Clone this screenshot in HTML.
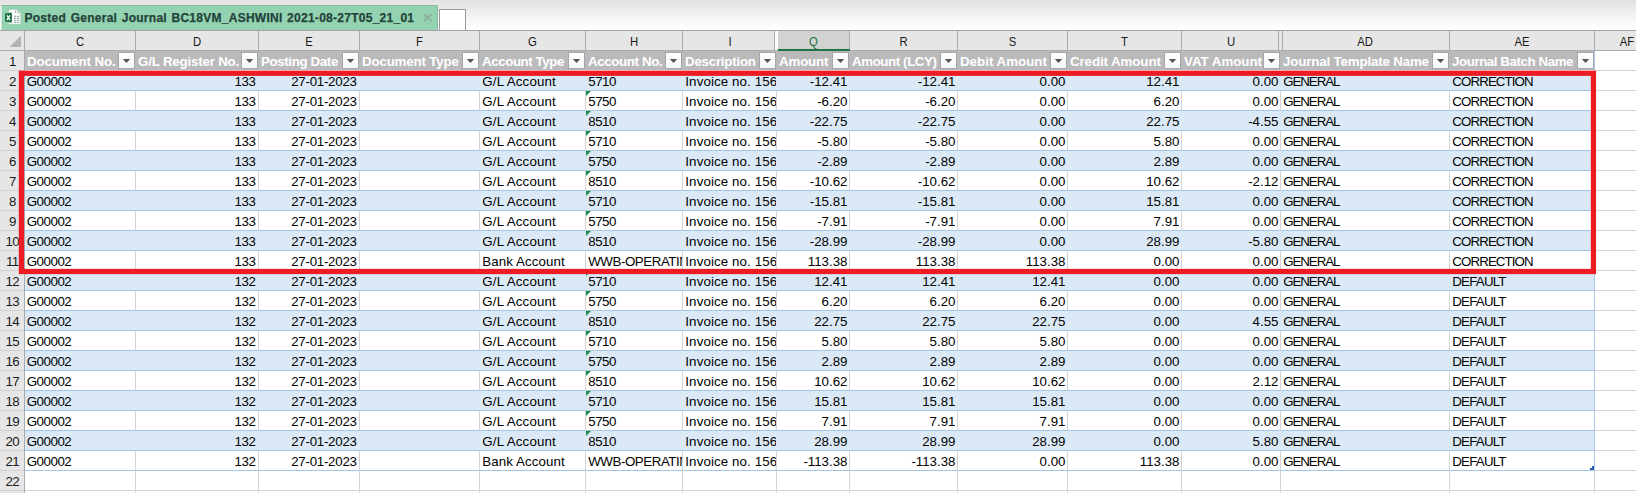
<!DOCTYPE html><html><head><meta charset="utf-8"><title>Posted General Journal</title><style>
html,body{margin:0;padding:0}
body{width:1636px;height:493px;overflow:hidden;position:relative;background:#fff;font-family:"Liberation Sans",sans-serif;font-size:13.3px;color:#000}
div{position:absolute;box-sizing:border-box;white-space:nowrap}
#top{left:0;top:0;width:1636px;height:30px;background:linear-gradient(#e2e2e2,#fcfcfc 85%,#fefefe)}
#topline{left:0;top:30px;width:1636px;height:1px;background:#a3a3a3}
#tab{left:1px;top:5px;width:437px;height:25px;background:#93d3b2;border:1px solid #8cb8a1;border-bottom:none;border-left:1px solid #cfe9dc}
#tabtxt{left:24.5px;top:11px;font-weight:bold;font-size:12px;line-height:14px;color:#24433a;letter-spacing:0.27px;word-spacing:0.9px;-webkit-text-stroke:0.25px #24433a}
#newtab{left:439px;top:9px;width:27px;height:21px;background:#fff;border:1px solid #9a9a9a;border-bottom:none}
#chbg{left:0;top:31px;width:1636px;height:19px;background:#e6e6e6}
#chline{left:0;top:50px;width:1636px;height:1px;background:#ababab}
.vs{top:31px;width:1px;height:19px;background:#ababab}
.ch{top:31px;height:19px;text-align:center;line-height:21px;font-size:13px;color:#1a1a1a;overflow:hidden;transform:scaleX(0.87)}
.ch.sel{color:#217346}
#rhbg{left:0;top:51px;width:25px;height:442px;background:#e6e6e6;border-right:1px solid #ababab}
.rh{left:0;width:24px;height:20px;border-bottom:1px solid #d2d2d2;text-align:center;line-height:21px;font-size:13.3px;letter-spacing:-0.5px;padding-left:0.7px;color:#1a1a1a;overflow:hidden}
#hbg{left:25px;top:51px;width:1570px;height:19px;background:#bababa}
.hc{top:51px;height:19px;color:#fff;font-weight:bold;line-height:22px;padding-left:2px;overflow:hidden}
.fb{top:52px;width:17px;height:17px;background:linear-gradient(#fefefe,#f5f7fb);border:1px solid #a6a6a6}
.fb svg{position:absolute;left:0;top:0}
.c{height:20px;line-height:20px;overflow:hidden;padding:1px 1.5px 0 2.3px;border-bottom:1px solid #a3c6e7;border-right:1px solid #dbe9f6;background:#dbe9f6}
.c.w{border-right-color:#d4d4d4;background:#fff}
.c.r{text-align:right}
.tri{width:0;height:0;border-top:5.5px solid #1b8a42;border-right:5.5px solid transparent}
.e{height:20px;border-right:1px solid #d4d4d4;border-bottom:1px solid #d4d4d4}
</style></head><body>
<div id="top"></div>
<div id="tab"></div>
<svg style="position:absolute;left:4px;top:8px" width="18" height="18" viewBox="0 0 18 18"><path d="M4.8 1.8H13L16.4 5.2V16.1H4.8z" fill="#fff" stroke="#b9cbc1" stroke-width="0.5"/><path d="M13 1.8V5.2H16.4z" fill="#dde6e1" stroke="#b0c2b8" stroke-width="0.4"/><path d="M11.4 3.2v1.6" stroke="#5d7468" stroke-width="0.8"/><g fill="#86a595"><rect x="10" y="7.8" width="2.2" height="1"/><rect x="13" y="7.8" width="2.2" height="1"/><rect x="10" y="9.8" width="2.2" height="1"/><rect x="13" y="9.8" width="2.2" height="1"/><rect x="10" y="11.8" width="2.2" height="1"/><rect x="13" y="11.8" width="2.2" height="1"/><rect x="10" y="13.8" width="2.2" height="1"/><rect x="13" y="13.8" width="2.2" height="1"/></g><path d="M1 5.5L7.9 4.4V14.7L1 13.6z" fill="#1e7145"/><path d="M2.9 7.4l3 4.8M5.9 7.4l-3 4.8" stroke="#fff" stroke-width="1.25" fill="none"/></svg>
<div id="tabtxt">Posted General Journal BC18VM_ASHWINI 2021-08-27T05_21_01</div>
<svg style="position:absolute;left:421px;top:12px" width="13" height="11"><path d="M2.6 2.3l8 6.6M10.6 2.3l-8 6.6" stroke="#90b1a0" stroke-width="2.1" fill="none"/></svg>
<div id="newtab"></div><div id="topline"></div>
<div id="chbg"></div>
<svg style="position:absolute;left:9px;top:35px" width="13" height="13"><path d="M12 0.5V12H0.5z" fill="#b4b4b4"/></svg>
<div class="ch" style="left:25px;width:110px">C</div>
<div class="ch" style="left:136px;width:122px">D</div>
<div class="ch" style="left:259px;width:100px">E</div>
<div class="ch" style="left:360px;width:119px">F</div>
<div class="ch" style="left:480px;width:105px">G</div>
<div class="ch" style="left:586px;width:96px">H</div>
<div class="ch" style="left:683px;width:94px">I</div>
<div style="left:775px;top:31px;width:3px;height:19px;background:#fbfbfb"></div>
<div style="left:778px;top:31px;width:71px;height:19px;background:#d2d2d2"></div>
<div class="ch sel" style="left:778px;width:71px">Q</div>
<div class="ch" style="left:850px;width:107px">R</div>
<div class="ch" style="left:958px;width:109px">S</div>
<div class="ch" style="left:1068px;width:113px">T</div>
<div class="ch" style="left:1182px;width:98px">U</div>
<div class="ch" style="left:1281px;width:168px">AD</div>
<div class="ch" style="left:1450px;width:144px">AE</div>
<div class="ch" style="left:1595px;width:64px">AF</div>
<div class="vs" style="left:24px"></div>
<div class="vs" style="left:135px"></div>
<div class="vs" style="left:258px"></div>
<div class="vs" style="left:359px"></div>
<div class="vs" style="left:479px"></div>
<div class="vs" style="left:585px"></div>
<div class="vs" style="left:682px"></div>
<div class="vs" style="left:774px"></div>
<div class="vs" style="left:849px"></div>
<div class="vs" style="left:957px"></div>
<div class="vs" style="left:1067px"></div>
<div class="vs" style="left:1181px"></div>
<div class="vs" style="left:1278px"></div>
<div class="vs" style="left:1282px"></div>
<div class="vs" style="left:1449px"></div>
<div class="vs" style="left:1594px"></div>
<div id="chline"></div>
<div style="left:778px;top:49px;width:72px;height:2px;background:#217346"></div>
<div id="rhbg"></div>
<div class="rh" style="top:51px">1</div>
<div class="rh" style="top:71px">2</div>
<div class="rh" style="top:91px">3</div>
<div class="rh" style="top:111px">4</div>
<div class="rh" style="top:131px">5</div>
<div class="rh" style="top:151px">6</div>
<div class="rh" style="top:171px">7</div>
<div class="rh" style="top:191px">8</div>
<div class="rh" style="top:211px">9</div>
<div class="rh" style="top:231px">10</div>
<div class="rh" style="top:251px">11</div>
<div class="rh" style="top:271px">12</div>
<div class="rh" style="top:291px">13</div>
<div class="rh" style="top:311px">14</div>
<div class="rh" style="top:331px">15</div>
<div class="rh" style="top:351px">16</div>
<div class="rh" style="top:371px">17</div>
<div class="rh" style="top:391px">18</div>
<div class="rh" style="top:411px">19</div>
<div class="rh" style="top:431px">20</div>
<div class="rh" style="top:451px">21</div>
<div class="rh" style="top:471px">22</div>
<div class="rh" style="top:491px">23</div>
<div id="hbg"></div>
<div class="hc" style="left:25px;width:111px;letter-spacing:-0.14px">Document No.</div>
<div class="fb" style="left:118px"><svg width="15" height="15"><path d="M3.8 5.9H11.2L7.5 9.9z" fill="#555"/></svg></div>
<div class="hc" style="left:136px;width:123px;letter-spacing:-0.18px">G/L Register No.</div>
<div class="fb" style="left:241px"><svg width="15" height="15"><path d="M3.8 5.9H11.2L7.5 9.9z" fill="#555"/></svg></div>
<div class="hc" style="left:259px;width:101px;letter-spacing:-0.36px">Posting Date</div>
<div class="fb" style="left:342px"><svg width="15" height="15"><path d="M3.8 5.9H11.2L7.5 9.9z" fill="#555"/></svg></div>
<div class="hc" style="left:360px;width:120px;letter-spacing:-0.16px">Document Type</div>
<div class="fb" style="left:462px"><svg width="15" height="15"><path d="M3.8 5.9H11.2L7.5 9.9z" fill="#555"/></svg></div>
<div class="hc" style="left:480px;width:106px;letter-spacing:-0.41px">Account Type</div>
<div class="fb" style="left:568px"><svg width="15" height="15"><path d="M3.8 5.9H11.2L7.5 9.9z" fill="#555"/></svg></div>
<div class="hc" style="left:586px;width:97px;letter-spacing:-0.37px">Account No.</div>
<div class="fb" style="left:665px"><svg width="15" height="15"><path d="M3.8 5.9H11.2L7.5 9.9z" fill="#555"/></svg></div>
<div class="hc" style="left:683px;width:94px;letter-spacing:-0.22px">Description</div>
<div class="fb" style="left:759px"><svg width="15" height="15"><path d="M3.8 5.9H11.2L7.5 9.9z" fill="#555"/></svg></div>
<div class="hc" style="left:777px;width:73px;letter-spacing:-0.15px">Amount</div>
<div class="fb" style="left:832px"><svg width="15" height="15"><path d="M3.8 5.9H11.2L7.5 9.9z" fill="#555"/></svg></div>
<div class="hc" style="left:850px;width:108px;letter-spacing:-0.4px">Amount (LCY)</div>
<div class="fb" style="left:940px"><svg width="15" height="15"><path d="M3.8 5.9H11.2L7.5 9.9z" fill="#555"/></svg></div>
<div class="hc" style="left:958px;width:110px;letter-spacing:0.02px">Debit Amount</div>
<div class="fb" style="left:1050px"><svg width="15" height="15"><path d="M3.8 5.9H11.2L7.5 9.9z" fill="#555"/></svg></div>
<div class="hc" style="left:1068px;width:114px;letter-spacing:-0.08px">Credit Amount</div>
<div class="fb" style="left:1164px"><svg width="15" height="15"><path d="M3.8 5.9H11.2L7.5 9.9z" fill="#555"/></svg></div>
<div class="hc" style="left:1182px;width:99px;letter-spacing:0px">VAT Amount</div>
<div class="fb" style="left:1263px"><svg width="15" height="15"><path d="M3.8 5.9H11.2L7.5 9.9z" fill="#555"/></svg></div>
<div class="hc" style="left:1281px;width:169px;letter-spacing:-0.15px">Journal Template Name</div>
<div class="fb" style="left:1432px"><svg width="15" height="15"><path d="M3.8 5.9H11.2L7.5 9.9z" fill="#555"/></svg></div>
<div class="hc" style="left:1450px;width:145px;letter-spacing:-0.42px">Journal Batch Name</div>
<div class="fb" style="left:1577px"><svg width="15" height="15"><path d="M3.8 5.9H11.2L7.5 9.9z" fill="#555"/></svg></div>
<div class="c" style="left:25px;top:71px;width:111px;letter-spacing:-0.45px;padding-left:1.7px">G00002</div>
<div class="c r" style="left:136px;top:71px;width:123px;letter-spacing:-0.3px;padding-right:2.3px">133</div>
<div class="c r" style="left:259px;top:71px;width:101px;letter-spacing:-0.25px;padding-right:2.3px">27-01-2023</div>
<div class="c" style="left:360px;top:71px;width:120px"></div>
<div class="c" style="left:480px;top:71px;width:106px;letter-spacing:0.15px">G/L Account</div>
<div class="c" style="left:586px;top:71px;width:97px;letter-spacing:-0.45px;padding-left:2.2px">5710</div>
<div class="c" style="left:683px;top:71px;width:94px;letter-spacing:0.12px">Invoice no. 156</div>
<div class="c r" style="left:777px;top:71px;width:73px">-12.41</div>
<div class="c r" style="left:850px;top:71px;width:108px">-12.41</div>
<div class="c r" style="left:958px;top:71px;width:110px">0.00</div>
<div class="c r" style="left:1068px;top:71px;width:114px">12.41</div>
<div class="c r" style="left:1182px;top:71px;width:99px">0.00</div>
<div class="c" style="left:1281px;top:71px;width:169px;letter-spacing:-1.08px">GENERAL</div>
<div class="c" style="left:1450px;top:71px;width:145px;letter-spacing:-0.89px">CORRECTION</div>
<div class="c w" style="left:25px;top:91px;width:111px;letter-spacing:-0.45px;padding-left:1.7px">G00002</div>
<div class="c w r" style="left:136px;top:91px;width:123px;letter-spacing:-0.3px;padding-right:2.3px">133</div>
<div class="c w r" style="left:259px;top:91px;width:101px;letter-spacing:-0.25px;padding-right:2.3px">27-01-2023</div>
<div class="c w" style="left:360px;top:91px;width:120px"></div>
<div class="c w" style="left:480px;top:91px;width:106px;letter-spacing:0.15px">G/L Account</div>
<div class="c w" style="left:586px;top:91px;width:97px;letter-spacing:-0.45px;padding-left:2.2px">5750</div>
<div class="tri" style="left:586px;top:91px"></div>
<div class="c w" style="left:683px;top:91px;width:94px;letter-spacing:0.12px">Invoice no. 156</div>
<div class="c w r" style="left:777px;top:91px;width:73px">-6.20</div>
<div class="c w r" style="left:850px;top:91px;width:108px">-6.20</div>
<div class="c w r" style="left:958px;top:91px;width:110px">0.00</div>
<div class="c w r" style="left:1068px;top:91px;width:114px">6.20</div>
<div class="c w r" style="left:1182px;top:91px;width:99px">0.00</div>
<div class="c w" style="left:1281px;top:91px;width:169px;letter-spacing:-1.08px">GENERAL</div>
<div class="c w" style="left:1450px;top:91px;width:145px;letter-spacing:-0.89px">CORRECTION</div>
<div class="c" style="left:25px;top:111px;width:111px;letter-spacing:-0.45px;padding-left:1.7px">G00002</div>
<div class="c r" style="left:136px;top:111px;width:123px;letter-spacing:-0.3px;padding-right:2.3px">133</div>
<div class="c r" style="left:259px;top:111px;width:101px;letter-spacing:-0.25px;padding-right:2.3px">27-01-2023</div>
<div class="c" style="left:360px;top:111px;width:120px"></div>
<div class="c" style="left:480px;top:111px;width:106px;letter-spacing:0.15px">G/L Account</div>
<div class="c" style="left:586px;top:111px;width:97px;letter-spacing:-0.45px;padding-left:2.2px">8510</div>
<div class="tri" style="left:586px;top:111px"></div>
<div class="c" style="left:683px;top:111px;width:94px;letter-spacing:0.12px">Invoice no. 156</div>
<div class="c r" style="left:777px;top:111px;width:73px">-22.75</div>
<div class="c r" style="left:850px;top:111px;width:108px">-22.75</div>
<div class="c r" style="left:958px;top:111px;width:110px">0.00</div>
<div class="c r" style="left:1068px;top:111px;width:114px">22.75</div>
<div class="c r" style="left:1182px;top:111px;width:99px">-4.55</div>
<div class="c" style="left:1281px;top:111px;width:169px;letter-spacing:-1.08px">GENERAL</div>
<div class="c" style="left:1450px;top:111px;width:145px;letter-spacing:-0.89px">CORRECTION</div>
<div class="c w" style="left:25px;top:131px;width:111px;letter-spacing:-0.45px;padding-left:1.7px">G00002</div>
<div class="c w r" style="left:136px;top:131px;width:123px;letter-spacing:-0.3px;padding-right:2.3px">133</div>
<div class="c w r" style="left:259px;top:131px;width:101px;letter-spacing:-0.25px;padding-right:2.3px">27-01-2023</div>
<div class="c w" style="left:360px;top:131px;width:120px"></div>
<div class="c w" style="left:480px;top:131px;width:106px;letter-spacing:0.15px">G/L Account</div>
<div class="c w" style="left:586px;top:131px;width:97px;letter-spacing:-0.45px;padding-left:2.2px">5710</div>
<div class="tri" style="left:586px;top:131px"></div>
<div class="c w" style="left:683px;top:131px;width:94px;letter-spacing:0.12px">Invoice no. 156</div>
<div class="c w r" style="left:777px;top:131px;width:73px">-5.80</div>
<div class="c w r" style="left:850px;top:131px;width:108px">-5.80</div>
<div class="c w r" style="left:958px;top:131px;width:110px">0.00</div>
<div class="c w r" style="left:1068px;top:131px;width:114px">5.80</div>
<div class="c w r" style="left:1182px;top:131px;width:99px">0.00</div>
<div class="c w" style="left:1281px;top:131px;width:169px;letter-spacing:-1.08px">GENERAL</div>
<div class="c w" style="left:1450px;top:131px;width:145px;letter-spacing:-0.89px">CORRECTION</div>
<div class="c" style="left:25px;top:151px;width:111px;letter-spacing:-0.45px;padding-left:1.7px">G00002</div>
<div class="c r" style="left:136px;top:151px;width:123px;letter-spacing:-0.3px;padding-right:2.3px">133</div>
<div class="c r" style="left:259px;top:151px;width:101px;letter-spacing:-0.25px;padding-right:2.3px">27-01-2023</div>
<div class="c" style="left:360px;top:151px;width:120px"></div>
<div class="c" style="left:480px;top:151px;width:106px;letter-spacing:0.15px">G/L Account</div>
<div class="c" style="left:586px;top:151px;width:97px;letter-spacing:-0.45px;padding-left:2.2px">5750</div>
<div class="tri" style="left:586px;top:151px"></div>
<div class="c" style="left:683px;top:151px;width:94px;letter-spacing:0.12px">Invoice no. 156</div>
<div class="c r" style="left:777px;top:151px;width:73px">-2.89</div>
<div class="c r" style="left:850px;top:151px;width:108px">-2.89</div>
<div class="c r" style="left:958px;top:151px;width:110px">0.00</div>
<div class="c r" style="left:1068px;top:151px;width:114px">2.89</div>
<div class="c r" style="left:1182px;top:151px;width:99px">0.00</div>
<div class="c" style="left:1281px;top:151px;width:169px;letter-spacing:-1.08px">GENERAL</div>
<div class="c" style="left:1450px;top:151px;width:145px;letter-spacing:-0.89px">CORRECTION</div>
<div class="c w" style="left:25px;top:171px;width:111px;letter-spacing:-0.45px;padding-left:1.7px">G00002</div>
<div class="c w r" style="left:136px;top:171px;width:123px;letter-spacing:-0.3px;padding-right:2.3px">133</div>
<div class="c w r" style="left:259px;top:171px;width:101px;letter-spacing:-0.25px;padding-right:2.3px">27-01-2023</div>
<div class="c w" style="left:360px;top:171px;width:120px"></div>
<div class="c w" style="left:480px;top:171px;width:106px;letter-spacing:0.15px">G/L Account</div>
<div class="c w" style="left:586px;top:171px;width:97px;letter-spacing:-0.45px;padding-left:2.2px">8510</div>
<div class="tri" style="left:586px;top:171px"></div>
<div class="c w" style="left:683px;top:171px;width:94px;letter-spacing:0.12px">Invoice no. 156</div>
<div class="c w r" style="left:777px;top:171px;width:73px">-10.62</div>
<div class="c w r" style="left:850px;top:171px;width:108px">-10.62</div>
<div class="c w r" style="left:958px;top:171px;width:110px">0.00</div>
<div class="c w r" style="left:1068px;top:171px;width:114px">10.62</div>
<div class="c w r" style="left:1182px;top:171px;width:99px">-2.12</div>
<div class="c w" style="left:1281px;top:171px;width:169px;letter-spacing:-1.08px">GENERAL</div>
<div class="c w" style="left:1450px;top:171px;width:145px;letter-spacing:-0.89px">CORRECTION</div>
<div class="c" style="left:25px;top:191px;width:111px;letter-spacing:-0.45px;padding-left:1.7px">G00002</div>
<div class="c r" style="left:136px;top:191px;width:123px;letter-spacing:-0.3px;padding-right:2.3px">133</div>
<div class="c r" style="left:259px;top:191px;width:101px;letter-spacing:-0.25px;padding-right:2.3px">27-01-2023</div>
<div class="c" style="left:360px;top:191px;width:120px"></div>
<div class="c" style="left:480px;top:191px;width:106px;letter-spacing:0.15px">G/L Account</div>
<div class="c" style="left:586px;top:191px;width:97px;letter-spacing:-0.45px;padding-left:2.2px">5710</div>
<div class="tri" style="left:586px;top:191px"></div>
<div class="c" style="left:683px;top:191px;width:94px;letter-spacing:0.12px">Invoice no. 156</div>
<div class="c r" style="left:777px;top:191px;width:73px">-15.81</div>
<div class="c r" style="left:850px;top:191px;width:108px">-15.81</div>
<div class="c r" style="left:958px;top:191px;width:110px">0.00</div>
<div class="c r" style="left:1068px;top:191px;width:114px">15.81</div>
<div class="c r" style="left:1182px;top:191px;width:99px">0.00</div>
<div class="c" style="left:1281px;top:191px;width:169px;letter-spacing:-1.08px">GENERAL</div>
<div class="c" style="left:1450px;top:191px;width:145px;letter-spacing:-0.89px">CORRECTION</div>
<div class="c w" style="left:25px;top:211px;width:111px;letter-spacing:-0.45px;padding-left:1.7px">G00002</div>
<div class="c w r" style="left:136px;top:211px;width:123px;letter-spacing:-0.3px;padding-right:2.3px">133</div>
<div class="c w r" style="left:259px;top:211px;width:101px;letter-spacing:-0.25px;padding-right:2.3px">27-01-2023</div>
<div class="c w" style="left:360px;top:211px;width:120px"></div>
<div class="c w" style="left:480px;top:211px;width:106px;letter-spacing:0.15px">G/L Account</div>
<div class="c w" style="left:586px;top:211px;width:97px;letter-spacing:-0.45px;padding-left:2.2px">5750</div>
<div class="tri" style="left:586px;top:211px"></div>
<div class="c w" style="left:683px;top:211px;width:94px;letter-spacing:0.12px">Invoice no. 156</div>
<div class="c w r" style="left:777px;top:211px;width:73px">-7.91</div>
<div class="c w r" style="left:850px;top:211px;width:108px">-7.91</div>
<div class="c w r" style="left:958px;top:211px;width:110px">0.00</div>
<div class="c w r" style="left:1068px;top:211px;width:114px">7.91</div>
<div class="c w r" style="left:1182px;top:211px;width:99px">0.00</div>
<div class="c w" style="left:1281px;top:211px;width:169px;letter-spacing:-1.08px">GENERAL</div>
<div class="c w" style="left:1450px;top:211px;width:145px;letter-spacing:-0.89px">CORRECTION</div>
<div class="c" style="left:25px;top:231px;width:111px;letter-spacing:-0.45px;padding-left:1.7px">G00002</div>
<div class="c r" style="left:136px;top:231px;width:123px;letter-spacing:-0.3px;padding-right:2.3px">133</div>
<div class="c r" style="left:259px;top:231px;width:101px;letter-spacing:-0.25px;padding-right:2.3px">27-01-2023</div>
<div class="c" style="left:360px;top:231px;width:120px"></div>
<div class="c" style="left:480px;top:231px;width:106px;letter-spacing:0.15px">G/L Account</div>
<div class="c" style="left:586px;top:231px;width:97px;letter-spacing:-0.45px;padding-left:2.2px">8510</div>
<div class="tri" style="left:586px;top:231px"></div>
<div class="c" style="left:683px;top:231px;width:94px;letter-spacing:0.12px">Invoice no. 156</div>
<div class="c r" style="left:777px;top:231px;width:73px">-28.99</div>
<div class="c r" style="left:850px;top:231px;width:108px">-28.99</div>
<div class="c r" style="left:958px;top:231px;width:110px">0.00</div>
<div class="c r" style="left:1068px;top:231px;width:114px">28.99</div>
<div class="c r" style="left:1182px;top:231px;width:99px">-5.80</div>
<div class="c" style="left:1281px;top:231px;width:169px;letter-spacing:-1.08px">GENERAL</div>
<div class="c" style="left:1450px;top:231px;width:145px;letter-spacing:-0.89px">CORRECTION</div>
<div class="c w" style="left:25px;top:251px;width:111px;letter-spacing:-0.45px;padding-left:1.7px">G00002</div>
<div class="c w r" style="left:136px;top:251px;width:123px;letter-spacing:-0.3px;padding-right:2.3px">133</div>
<div class="c w r" style="left:259px;top:251px;width:101px;letter-spacing:-0.25px;padding-right:2.3px">27-01-2023</div>
<div class="c w" style="left:360px;top:251px;width:120px"></div>
<div class="c w" style="left:480px;top:251px;width:106px;letter-spacing:0.1px">Bank Account</div>
<div class="c w" style="left:586px;top:251px;width:97px;letter-spacing:-0.42px;padding-left:2.2px">WWB-OPERATING</div>
<div class="c w" style="left:683px;top:251px;width:94px;letter-spacing:0.12px">Invoice no. 156</div>
<div class="c w r" style="left:777px;top:251px;width:73px">113.38</div>
<div class="c w r" style="left:850px;top:251px;width:108px">113.38</div>
<div class="c w r" style="left:958px;top:251px;width:110px">113.38</div>
<div class="c w r" style="left:1068px;top:251px;width:114px">0.00</div>
<div class="c w r" style="left:1182px;top:251px;width:99px">0.00</div>
<div class="c w" style="left:1281px;top:251px;width:169px;letter-spacing:-1.08px">GENERAL</div>
<div class="c w" style="left:1450px;top:251px;width:145px;letter-spacing:-0.89px">CORRECTION</div>
<div class="c" style="left:25px;top:271px;width:111px;letter-spacing:-0.45px;padding-left:1.7px">G00002</div>
<div class="c r" style="left:136px;top:271px;width:123px;letter-spacing:-0.3px;padding-right:2.3px">132</div>
<div class="c r" style="left:259px;top:271px;width:101px;letter-spacing:-0.25px;padding-right:2.3px">27-01-2023</div>
<div class="c" style="left:360px;top:271px;width:120px"></div>
<div class="c" style="left:480px;top:271px;width:106px;letter-spacing:0.15px">G/L Account</div>
<div class="c" style="left:586px;top:271px;width:97px;letter-spacing:-0.45px;padding-left:2.2px">5710</div>
<div class="tri" style="left:586px;top:271px"></div>
<div class="c" style="left:683px;top:271px;width:94px;letter-spacing:0.12px">Invoice no. 156</div>
<div class="c r" style="left:777px;top:271px;width:73px">12.41</div>
<div class="c r" style="left:850px;top:271px;width:108px">12.41</div>
<div class="c r" style="left:958px;top:271px;width:110px">12.41</div>
<div class="c r" style="left:1068px;top:271px;width:114px">0.00</div>
<div class="c r" style="left:1182px;top:271px;width:99px">0.00</div>
<div class="c" style="left:1281px;top:271px;width:169px;letter-spacing:-1.08px">GENERAL</div>
<div class="c" style="left:1450px;top:271px;width:145px;letter-spacing:-0.78px">DEFAULT</div>
<div class="c w" style="left:25px;top:291px;width:111px;letter-spacing:-0.45px;padding-left:1.7px">G00002</div>
<div class="c w r" style="left:136px;top:291px;width:123px;letter-spacing:-0.3px;padding-right:2.3px">132</div>
<div class="c w r" style="left:259px;top:291px;width:101px;letter-spacing:-0.25px;padding-right:2.3px">27-01-2023</div>
<div class="c w" style="left:360px;top:291px;width:120px"></div>
<div class="c w" style="left:480px;top:291px;width:106px;letter-spacing:0.15px">G/L Account</div>
<div class="c w" style="left:586px;top:291px;width:97px;letter-spacing:-0.45px;padding-left:2.2px">5750</div>
<div class="tri" style="left:586px;top:291px"></div>
<div class="c w" style="left:683px;top:291px;width:94px;letter-spacing:0.12px">Invoice no. 156</div>
<div class="c w r" style="left:777px;top:291px;width:73px">6.20</div>
<div class="c w r" style="left:850px;top:291px;width:108px">6.20</div>
<div class="c w r" style="left:958px;top:291px;width:110px">6.20</div>
<div class="c w r" style="left:1068px;top:291px;width:114px">0.00</div>
<div class="c w r" style="left:1182px;top:291px;width:99px">0.00</div>
<div class="c w" style="left:1281px;top:291px;width:169px;letter-spacing:-1.08px">GENERAL</div>
<div class="c w" style="left:1450px;top:291px;width:145px;letter-spacing:-0.78px">DEFAULT</div>
<div class="c" style="left:25px;top:311px;width:111px;letter-spacing:-0.45px;padding-left:1.7px">G00002</div>
<div class="c r" style="left:136px;top:311px;width:123px;letter-spacing:-0.3px;padding-right:2.3px">132</div>
<div class="c r" style="left:259px;top:311px;width:101px;letter-spacing:-0.25px;padding-right:2.3px">27-01-2023</div>
<div class="c" style="left:360px;top:311px;width:120px"></div>
<div class="c" style="left:480px;top:311px;width:106px;letter-spacing:0.15px">G/L Account</div>
<div class="c" style="left:586px;top:311px;width:97px;letter-spacing:-0.45px;padding-left:2.2px">8510</div>
<div class="tri" style="left:586px;top:311px"></div>
<div class="c" style="left:683px;top:311px;width:94px;letter-spacing:0.12px">Invoice no. 156</div>
<div class="c r" style="left:777px;top:311px;width:73px">22.75</div>
<div class="c r" style="left:850px;top:311px;width:108px">22.75</div>
<div class="c r" style="left:958px;top:311px;width:110px">22.75</div>
<div class="c r" style="left:1068px;top:311px;width:114px">0.00</div>
<div class="c r" style="left:1182px;top:311px;width:99px">4.55</div>
<div class="c" style="left:1281px;top:311px;width:169px;letter-spacing:-1.08px">GENERAL</div>
<div class="c" style="left:1450px;top:311px;width:145px;letter-spacing:-0.78px">DEFAULT</div>
<div class="c w" style="left:25px;top:331px;width:111px;letter-spacing:-0.45px;padding-left:1.7px">G00002</div>
<div class="c w r" style="left:136px;top:331px;width:123px;letter-spacing:-0.3px;padding-right:2.3px">132</div>
<div class="c w r" style="left:259px;top:331px;width:101px;letter-spacing:-0.25px;padding-right:2.3px">27-01-2023</div>
<div class="c w" style="left:360px;top:331px;width:120px"></div>
<div class="c w" style="left:480px;top:331px;width:106px;letter-spacing:0.15px">G/L Account</div>
<div class="c w" style="left:586px;top:331px;width:97px;letter-spacing:-0.45px;padding-left:2.2px">5710</div>
<div class="tri" style="left:586px;top:331px"></div>
<div class="c w" style="left:683px;top:331px;width:94px;letter-spacing:0.12px">Invoice no. 156</div>
<div class="c w r" style="left:777px;top:331px;width:73px">5.80</div>
<div class="c w r" style="left:850px;top:331px;width:108px">5.80</div>
<div class="c w r" style="left:958px;top:331px;width:110px">5.80</div>
<div class="c w r" style="left:1068px;top:331px;width:114px">0.00</div>
<div class="c w r" style="left:1182px;top:331px;width:99px">0.00</div>
<div class="c w" style="left:1281px;top:331px;width:169px;letter-spacing:-1.08px">GENERAL</div>
<div class="c w" style="left:1450px;top:331px;width:145px;letter-spacing:-0.78px">DEFAULT</div>
<div class="c" style="left:25px;top:351px;width:111px;letter-spacing:-0.45px;padding-left:1.7px">G00002</div>
<div class="c r" style="left:136px;top:351px;width:123px;letter-spacing:-0.3px;padding-right:2.3px">132</div>
<div class="c r" style="left:259px;top:351px;width:101px;letter-spacing:-0.25px;padding-right:2.3px">27-01-2023</div>
<div class="c" style="left:360px;top:351px;width:120px"></div>
<div class="c" style="left:480px;top:351px;width:106px;letter-spacing:0.15px">G/L Account</div>
<div class="c" style="left:586px;top:351px;width:97px;letter-spacing:-0.45px;padding-left:2.2px">5750</div>
<div class="tri" style="left:586px;top:351px"></div>
<div class="c" style="left:683px;top:351px;width:94px;letter-spacing:0.12px">Invoice no. 156</div>
<div class="c r" style="left:777px;top:351px;width:73px">2.89</div>
<div class="c r" style="left:850px;top:351px;width:108px">2.89</div>
<div class="c r" style="left:958px;top:351px;width:110px">2.89</div>
<div class="c r" style="left:1068px;top:351px;width:114px">0.00</div>
<div class="c r" style="left:1182px;top:351px;width:99px">0.00</div>
<div class="c" style="left:1281px;top:351px;width:169px;letter-spacing:-1.08px">GENERAL</div>
<div class="c" style="left:1450px;top:351px;width:145px;letter-spacing:-0.78px">DEFAULT</div>
<div class="c w" style="left:25px;top:371px;width:111px;letter-spacing:-0.45px;padding-left:1.7px">G00002</div>
<div class="c w r" style="left:136px;top:371px;width:123px;letter-spacing:-0.3px;padding-right:2.3px">132</div>
<div class="c w r" style="left:259px;top:371px;width:101px;letter-spacing:-0.25px;padding-right:2.3px">27-01-2023</div>
<div class="c w" style="left:360px;top:371px;width:120px"></div>
<div class="c w" style="left:480px;top:371px;width:106px;letter-spacing:0.15px">G/L Account</div>
<div class="c w" style="left:586px;top:371px;width:97px;letter-spacing:-0.45px;padding-left:2.2px">8510</div>
<div class="tri" style="left:586px;top:371px"></div>
<div class="c w" style="left:683px;top:371px;width:94px;letter-spacing:0.12px">Invoice no. 156</div>
<div class="c w r" style="left:777px;top:371px;width:73px">10.62</div>
<div class="c w r" style="left:850px;top:371px;width:108px">10.62</div>
<div class="c w r" style="left:958px;top:371px;width:110px">10.62</div>
<div class="c w r" style="left:1068px;top:371px;width:114px">0.00</div>
<div class="c w r" style="left:1182px;top:371px;width:99px">2.12</div>
<div class="c w" style="left:1281px;top:371px;width:169px;letter-spacing:-1.08px">GENERAL</div>
<div class="c w" style="left:1450px;top:371px;width:145px;letter-spacing:-0.78px">DEFAULT</div>
<div class="c" style="left:25px;top:391px;width:111px;letter-spacing:-0.45px;padding-left:1.7px">G00002</div>
<div class="c r" style="left:136px;top:391px;width:123px;letter-spacing:-0.3px;padding-right:2.3px">132</div>
<div class="c r" style="left:259px;top:391px;width:101px;letter-spacing:-0.25px;padding-right:2.3px">27-01-2023</div>
<div class="c" style="left:360px;top:391px;width:120px"></div>
<div class="c" style="left:480px;top:391px;width:106px;letter-spacing:0.15px">G/L Account</div>
<div class="c" style="left:586px;top:391px;width:97px;letter-spacing:-0.45px;padding-left:2.2px">5710</div>
<div class="tri" style="left:586px;top:391px"></div>
<div class="c" style="left:683px;top:391px;width:94px;letter-spacing:0.12px">Invoice no. 156</div>
<div class="c r" style="left:777px;top:391px;width:73px">15.81</div>
<div class="c r" style="left:850px;top:391px;width:108px">15.81</div>
<div class="c r" style="left:958px;top:391px;width:110px">15.81</div>
<div class="c r" style="left:1068px;top:391px;width:114px">0.00</div>
<div class="c r" style="left:1182px;top:391px;width:99px">0.00</div>
<div class="c" style="left:1281px;top:391px;width:169px;letter-spacing:-1.08px">GENERAL</div>
<div class="c" style="left:1450px;top:391px;width:145px;letter-spacing:-0.78px">DEFAULT</div>
<div class="c w" style="left:25px;top:411px;width:111px;letter-spacing:-0.45px;padding-left:1.7px">G00002</div>
<div class="c w r" style="left:136px;top:411px;width:123px;letter-spacing:-0.3px;padding-right:2.3px">132</div>
<div class="c w r" style="left:259px;top:411px;width:101px;letter-spacing:-0.25px;padding-right:2.3px">27-01-2023</div>
<div class="c w" style="left:360px;top:411px;width:120px"></div>
<div class="c w" style="left:480px;top:411px;width:106px;letter-spacing:0.15px">G/L Account</div>
<div class="c w" style="left:586px;top:411px;width:97px;letter-spacing:-0.45px;padding-left:2.2px">5750</div>
<div class="tri" style="left:586px;top:411px"></div>
<div class="c w" style="left:683px;top:411px;width:94px;letter-spacing:0.12px">Invoice no. 156</div>
<div class="c w r" style="left:777px;top:411px;width:73px">7.91</div>
<div class="c w r" style="left:850px;top:411px;width:108px">7.91</div>
<div class="c w r" style="left:958px;top:411px;width:110px">7.91</div>
<div class="c w r" style="left:1068px;top:411px;width:114px">0.00</div>
<div class="c w r" style="left:1182px;top:411px;width:99px">0.00</div>
<div class="c w" style="left:1281px;top:411px;width:169px;letter-spacing:-1.08px">GENERAL</div>
<div class="c w" style="left:1450px;top:411px;width:145px;letter-spacing:-0.78px">DEFAULT</div>
<div class="c" style="left:25px;top:431px;width:111px;letter-spacing:-0.45px;padding-left:1.7px">G00002</div>
<div class="c r" style="left:136px;top:431px;width:123px;letter-spacing:-0.3px;padding-right:2.3px">132</div>
<div class="c r" style="left:259px;top:431px;width:101px;letter-spacing:-0.25px;padding-right:2.3px">27-01-2023</div>
<div class="c" style="left:360px;top:431px;width:120px"></div>
<div class="c" style="left:480px;top:431px;width:106px;letter-spacing:0.15px">G/L Account</div>
<div class="c" style="left:586px;top:431px;width:97px;letter-spacing:-0.45px;padding-left:2.2px">8510</div>
<div class="tri" style="left:586px;top:431px"></div>
<div class="c" style="left:683px;top:431px;width:94px;letter-spacing:0.12px">Invoice no. 156</div>
<div class="c r" style="left:777px;top:431px;width:73px">28.99</div>
<div class="c r" style="left:850px;top:431px;width:108px">28.99</div>
<div class="c r" style="left:958px;top:431px;width:110px">28.99</div>
<div class="c r" style="left:1068px;top:431px;width:114px">0.00</div>
<div class="c r" style="left:1182px;top:431px;width:99px">5.80</div>
<div class="c" style="left:1281px;top:431px;width:169px;letter-spacing:-1.08px">GENERAL</div>
<div class="c" style="left:1450px;top:431px;width:145px;letter-spacing:-0.78px">DEFAULT</div>
<div class="c w" style="left:25px;top:451px;width:111px;letter-spacing:-0.45px;padding-left:1.7px">G00002</div>
<div class="c w r" style="left:136px;top:451px;width:123px;letter-spacing:-0.3px;padding-right:2.3px">132</div>
<div class="c w r" style="left:259px;top:451px;width:101px;letter-spacing:-0.25px;padding-right:2.3px">27-01-2023</div>
<div class="c w" style="left:360px;top:451px;width:120px"></div>
<div class="c w" style="left:480px;top:451px;width:106px;letter-spacing:0.1px">Bank Account</div>
<div class="c w" style="left:586px;top:451px;width:97px;letter-spacing:-0.42px;padding-left:2.2px">WWB-OPERATING</div>
<div class="c w" style="left:683px;top:451px;width:94px;letter-spacing:0.12px">Invoice no. 156</div>
<div class="c w r" style="left:777px;top:451px;width:73px">-113.38</div>
<div class="c w r" style="left:850px;top:451px;width:108px">-113.38</div>
<div class="c w r" style="left:958px;top:451px;width:110px">0.00</div>
<div class="c w r" style="left:1068px;top:451px;width:114px">113.38</div>
<div class="c w r" style="left:1182px;top:451px;width:99px">0.00</div>
<div class="c w" style="left:1281px;top:451px;width:169px;letter-spacing:-1.08px">GENERAL</div>
<div class="c w" style="left:1450px;top:451px;width:145px;letter-spacing:-0.78px">DEFAULT</div>
<div class="e" style="left:25px;top:471px;width:111px"></div>
<div class="e" style="left:136px;top:471px;width:123px"></div>
<div class="e" style="left:259px;top:471px;width:101px"></div>
<div class="e" style="left:360px;top:471px;width:120px"></div>
<div class="e" style="left:480px;top:471px;width:106px"></div>
<div class="e" style="left:586px;top:471px;width:97px"></div>
<div class="e" style="left:683px;top:471px;width:94px"></div>
<div class="e" style="left:777px;top:471px;width:73px"></div>
<div class="e" style="left:850px;top:471px;width:108px"></div>
<div class="e" style="left:958px;top:471px;width:110px"></div>
<div class="e" style="left:1068px;top:471px;width:114px"></div>
<div class="e" style="left:1182px;top:471px;width:99px"></div>
<div class="e" style="left:1281px;top:471px;width:169px"></div>
<div class="e" style="left:1450px;top:471px;width:145px"></div>
<div class="e" style="left:25px;top:491px;width:111px"></div>
<div class="e" style="left:136px;top:491px;width:123px"></div>
<div class="e" style="left:259px;top:491px;width:101px"></div>
<div class="e" style="left:360px;top:491px;width:120px"></div>
<div class="e" style="left:480px;top:491px;width:106px"></div>
<div class="e" style="left:586px;top:491px;width:97px"></div>
<div class="e" style="left:683px;top:491px;width:94px"></div>
<div class="e" style="left:777px;top:491px;width:73px"></div>
<div class="e" style="left:850px;top:491px;width:108px"></div>
<div class="e" style="left:958px;top:491px;width:110px"></div>
<div class="e" style="left:1068px;top:491px;width:114px"></div>
<div class="e" style="left:1182px;top:491px;width:99px"></div>
<div class="e" style="left:1281px;top:491px;width:169px"></div>
<div class="e" style="left:1450px;top:491px;width:145px"></div>
<div class="e" style="left:1595px;top:51px;width:106px"></div>
<div class="e" style="left:1595px;top:71px;width:106px"></div>
<div class="e" style="left:1595px;top:91px;width:106px"></div>
<div class="e" style="left:1595px;top:111px;width:106px"></div>
<div class="e" style="left:1595px;top:131px;width:106px"></div>
<div class="e" style="left:1595px;top:151px;width:106px"></div>
<div class="e" style="left:1595px;top:171px;width:106px"></div>
<div class="e" style="left:1595px;top:191px;width:106px"></div>
<div class="e" style="left:1595px;top:211px;width:106px"></div>
<div class="e" style="left:1595px;top:231px;width:106px"></div>
<div class="e" style="left:1595px;top:251px;width:106px"></div>
<div class="e" style="left:1595px;top:271px;width:106px"></div>
<div class="e" style="left:1595px;top:291px;width:106px"></div>
<div class="e" style="left:1595px;top:311px;width:106px"></div>
<div class="e" style="left:1595px;top:331px;width:106px"></div>
<div class="e" style="left:1595px;top:351px;width:106px"></div>
<div class="e" style="left:1595px;top:371px;width:106px"></div>
<div class="e" style="left:1595px;top:391px;width:106px"></div>
<div class="e" style="left:1595px;top:411px;width:106px"></div>
<div class="e" style="left:1595px;top:431px;width:106px"></div>
<div class="e" style="left:1595px;top:451px;width:106px"></div>
<div class="e" style="left:1595px;top:471px;width:106px"></div>
<div class="e" style="left:1595px;top:491px;width:106px"></div>
<div style="left:1594px;top:51px;width:1px;height:420px;background:#a9c9e8"></div>
<div style="left:1590px;top:466px;width:4px;height:4px;border-right:2px solid #2f5da8;border-bottom:2px solid #2f5da8"></div>
<svg style="position:absolute;left:0;top:0" width="1636" height="493"><rect x="21.42" y="73.25" width="1572.03" height="198.25" fill="none" stroke="#ed1c24" stroke-width="5.25"/></svg>
</body></html>
